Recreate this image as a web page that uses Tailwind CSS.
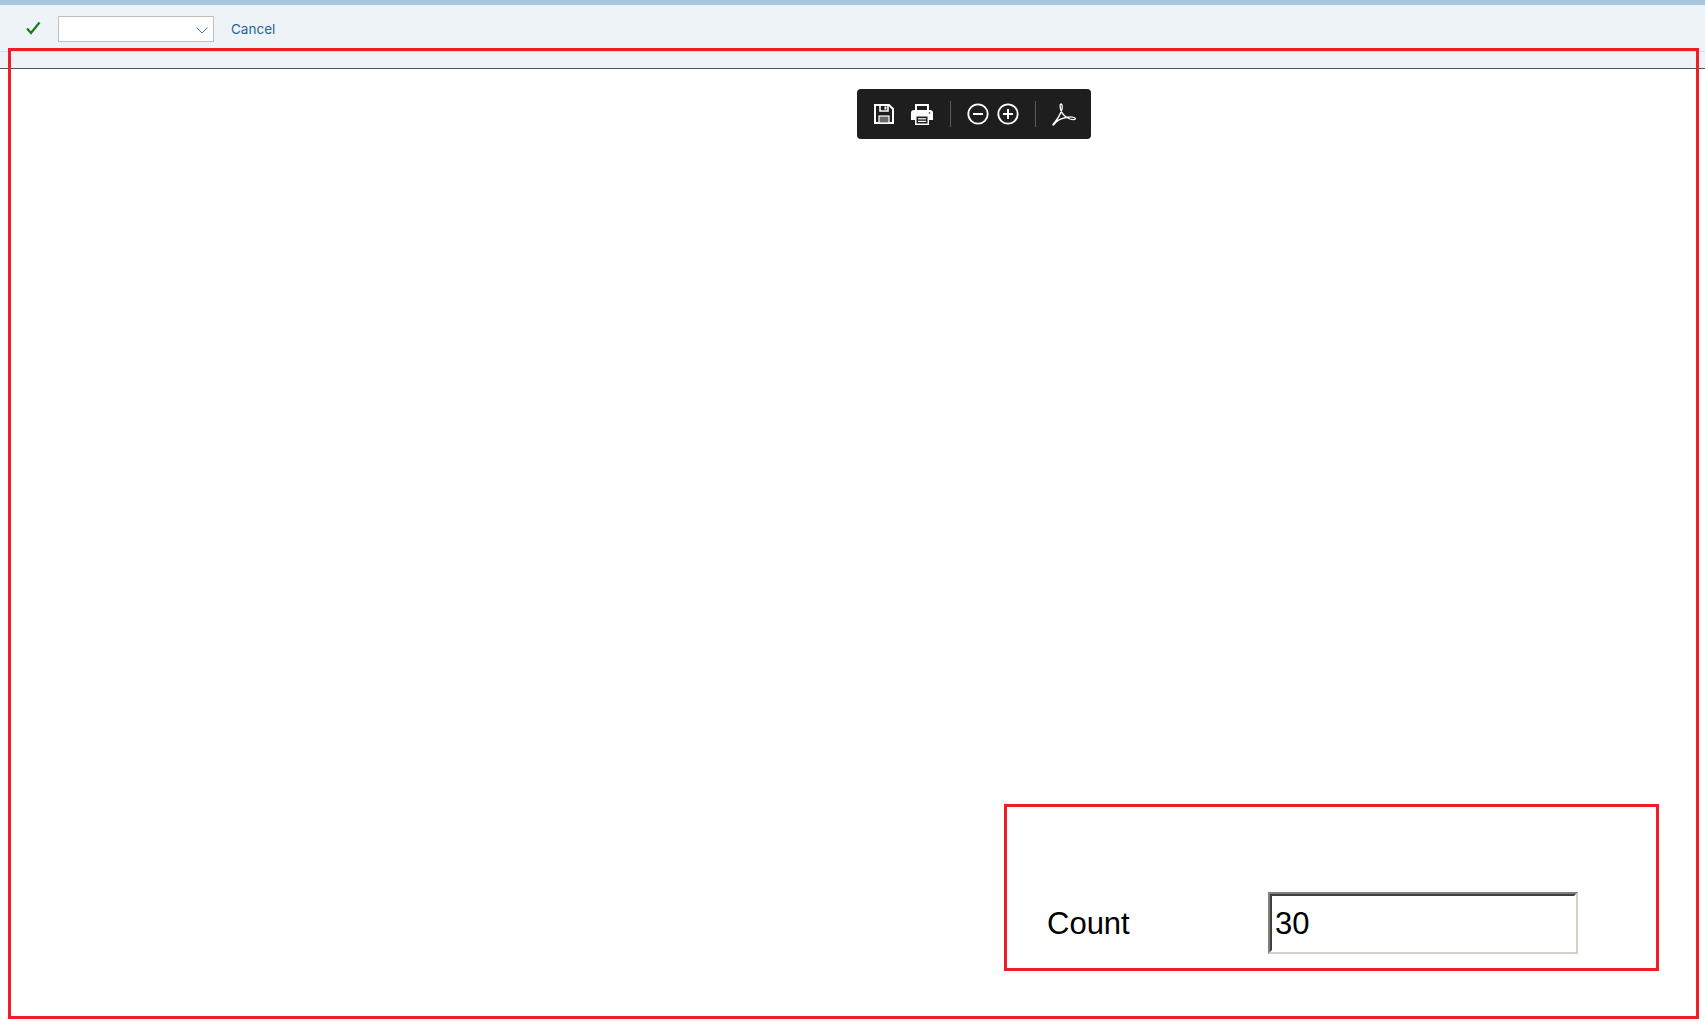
<!DOCTYPE html>
<html lang="en">
<head>
  <meta charset="UTF-8" />
  <title>Print preview</title>
  <script src="https://cdn.jsdelivr.net/npm/@tailwindcss/browser@4"></script>
</head>
<body class="bg-white h-[1031px] w-[1705px] overflow-hidden relative font-['Liberation_Sans',sans-serif]">
  <!-- shell header -->
  <div class="h-[69px] bg-[#eef3f8] border-t-[5px] border-[#a9c5df] border-b border-b-[#555555] flex flex-col">
    <div class="h-[47px] border-b border-[#cfe0f0] flex items-center pl-[25px] pt-[2px] shrink-0">
      <svg width="16" height="14" viewBox="0 0 16 14" fill="none" class="mt-[-2px]">
        <path d="M2 7.5 L6 12 L14.5 1.5" stroke="#1b7a1e" stroke-width="2.2"/>
      </svg>
      <div class="ml-[17px] w-[156px] h-[26px] bg-white border border-[#bfbfbf] flex items-center justify-end pr-[5px]">
        <svg width="12" height="7" viewBox="0 0 12 7" fill="none" class="mt-[3px]">
          <path d="M0.5 0.5 L6 6 L11.5 0.5" stroke="#3f7cb5" stroke-width="1"/>
        </svg>
      </div>
      <span class="ml-[17px] text-[13.5px] text-[#2b6296] font-['Inter',sans-serif]">Cancel</span>
    </div>
  </div>

  <!-- pdf toolbar -->
  <div class="ml-[857px] mt-[20px] w-[234px] h-[50px] bg-[#1e1e1e] rounded-[4px] flex items-center pl-[17px]">
    <svg width="20" height="20" viewBox="0 0 20 20" fill="none">
      <path d="M1 1 H15 L19 5 V19 H1 Z" stroke="white" stroke-width="2"/>
      <path d="M6 1 V7 H14 V1" stroke="white" stroke-width="1.6"/>
      <rect x="10.5" y="2.5" width="2" height="3" fill="white"/>
      <rect x="5" y="12" width="10" height="7" fill="#6a6a6a" stroke="white" stroke-width="1.2"/>
    </svg>
    <svg width="22" height="21" viewBox="0 0 22 21" class="ml-[17px]">
      <rect x="5" y="1" width="12" height="6" fill="none" stroke="white" stroke-width="2"/>
      <path d="M3 6 H19 Q22 6 22 9 V16 H0 V9 Q0 6 3 6 Z" fill="white"/>
      <circle cx="18.5" cy="9" r="0.8" fill="#1e1e1e"/>
      <rect x="4" y="11" width="14" height="10" fill="white"/>
      <rect x="5.5" y="12.5" width="11" height="7" fill="#1e1e1e"/>
      <rect x="7" y="14.2" width="8" height="1.2" fill="white"/>
      <rect x="7" y="16.8" width="8" height="1.2" fill="white"/>
    </svg>
    <div class="ml-[17px] w-px h-[26px] bg-[#5a5a5a]"></div>
    <svg width="22" height="22" viewBox="0 0 22 22" fill="none" class="ml-[16px]">
      <circle cx="11" cy="11" r="9.7" stroke="white" stroke-width="1.8"/>
      <path d="M6 11 H16" stroke="white" stroke-width="2"/>
    </svg>
    <svg width="22" height="22" viewBox="0 0 22 22" fill="none" class="ml-[8px]">
      <circle cx="11" cy="11" r="9.7" stroke="white" stroke-width="1.8"/>
      <path d="M6 11 H16 M11 6 V16" stroke="white" stroke-width="2"/>
    </svg>
    <div class="ml-[16px] w-px h-[26px] bg-[#5a5a5a]"></div>
    <svg width="24" height="23" viewBox="0 0 24 23" fill="none" class="ml-[16px]">
      <path d="M1 21.5 C4 18 8.5 12 10 6 C10.6 3 10 1 9 1 C7.8 1 7.8 4 9 7.5 C10.5 11.5 14 14.5 18 16 C21 17 23.5 17 23.3 15.5 C23 14 18.5 13.5 14 14.5 C9 15.5 4 18 2 21.5 C1.6 22.3 0.7 22.2 1 21.5 Z" stroke="white" stroke-width="1.3"/>
    </svg>
  </div>

  <!-- count field -->
  <div class="ml-[1007px] mt-[753px] flex items-center">
    <span class="w-[261px] pl-[40px] pt-[2px] text-[31px] text-black">Count</span>
    <div class="w-[310px] h-[62px] border-2 border-t-[#808080] border-l-[#808080] border-b-[#d4d0c8] border-r-[#d4d0c8]">
      <div class="h-full border-2 border-t-[#404040] border-l-[#404040] border-b-white border-r-white bg-white flex items-center pl-[3px] pt-[2px] text-[31px] text-black">30</div>
    </div>
  </div>

  <!-- annotation frames drawn over the screenshot -->
  <div class="absolute left-[8px] top-[48px] w-[1691px] h-[971px] border-[3px] border-[#f01c26]"></div>
  <div class="absolute left-[1004px] top-[804px] w-[655px] h-[167px] border-[3px] border-[#f01c26]"></div>
</body>
</html>
